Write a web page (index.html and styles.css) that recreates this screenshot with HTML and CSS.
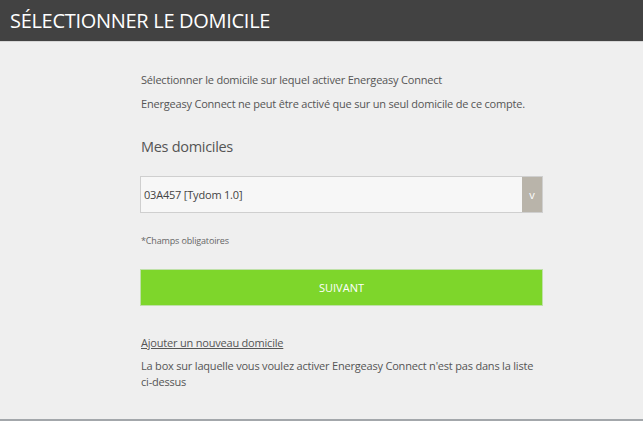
FILE: index.html
```html
<!DOCTYPE html>
<html lang="fr">
<head>
    <meta charset="UTF-8">
    <title>Sélectionner le domicile</title>
    <link rel="stylesheet" href="styles.css">
</head>
<body>
    <header class="topbar">
        <h1>SÉLECTIONNER LE DOMICILE</h1>
    </header>
    <div class="page">
        <form class="main">
            <p class="intro">Sélectionner le domicile sur lequel activer Energeasy Connect</p>
            <p class="intro">Energeasy Connect ne peut être activé que sur un seul domicile de ce compte.</p>
            <h2>Mes domiciles</h2>
            <div class="select">
                <span class="value">03A457 [Tydom 1.0]</span>
                <span class="arrow">v</span>
            </div>
            <p class="note">*Champs obligatoires</p>
            <button type="submit" class="next">SUIVANT</button>
            <a href="#" class="add">Ajouter un nouveau domicile</a>
            <p class="help">La box sur laquelle vous voulez activer Energeasy Connect n'est pas dans la liste ci-dessus</p>
        </form>
    </div>
</body>
</html>
```

FILE: styles.css
```css
html, body {
    margin: 0;
    padding: 0;
    height: 100%;
}

body {
    font-family: "Open Sans", "Noto Sans", sans-serif;
    background: #efefef;
    color: #555;
    display: flex;
    flex-direction: column;
}

.topbar {
    background: #424242;
    height: 41px;
    border-bottom: 1px solid #d6d6d6;
    display: flex;
    align-items: center;
    padding-left: 10px;
}

.topbar h1 {
    margin: 0;
    font-weight: normal;
    font-size: 20px;
    color: #fff;
    letter-spacing: -0.3px;
}

.page {
    flex: 1;
    border-bottom: 2px solid #a3a7ab;
    padding-left: 140px;
}

.main {
    width: 403px;
    padding-top: 30px;
}

.intro {
    margin: 0 0 8px 1px;
    font-size: 11px;
    letter-spacing: -0.2px;
    line-height: 16px;
}

h2 {
    margin: 23px 0 0 1px;
    font-weight: normal;
    font-size: 14.5px;
    letter-spacing: -0.3px;
    color: #555;
    line-height: 24px;
}

.select {
    margin-top: 17px;
    border: 1px solid #cfcfcf;
    background: #f7f7f7;
    display: flex;
    box-sizing: border-box;
    height: 37px;
}

.select .value {
    flex: 1;
    display: flex;
    align-items: center;
    padding-left: 3px;
    font-size: 11px;
    letter-spacing: -0.2px;
    color: #444;
}

.select .arrow {
    width: 20px;
    background: #b9b4aa;
    color: #fff;
    font-size: 11px;
    display: flex;
    align-items: center;
    justify-content: center;
}

.note {
    margin: 21px 0 0 1px;
    font-size: 9px;
    letter-spacing: -0.15px;
    color: #666;
}

.next {
    display: block;
    width: 100%;
    margin-top: 22px;
    height: 37px;
    border: 1px solid #bfe0a8;
    background: #7ed62b;
    color: #fff;
    font-family: inherit;
    font-size: 11px;
}

.add {
    display: inline-block;
    margin: 29px 0 0 1px;
    font-size: 11px;
    letter-spacing: -0.2px;
    color: #555;
}

.help {
    margin: 6px 0 0 1px;
    font-size: 11px;
    letter-spacing: -0.2px;
    line-height: 16px;
}
```
